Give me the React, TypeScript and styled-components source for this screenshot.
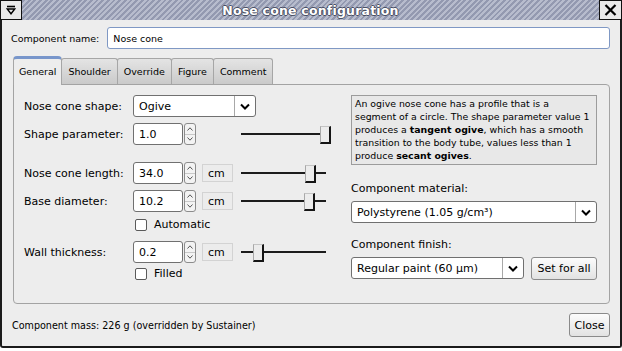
import React from 'react';
import styled, { createGlobalStyle } from 'styled-components';

const GlobalStyle = createGlobalStyle`
  html, body {
    margin: 0;
    padding: 0;
    background: #ffffff;
  }
  body {
    font-family: 'DejaVu Sans', 'Liberation Sans', sans-serif;
    font-size: 11px;
    color: #000;
  }
  * {
    box-sizing: border-box;
  }
`;

const Window = styled.div`
  width: 622px;
  height: 348px;
  display: flex;
  flex-direction: column;
`;

const TitleBar = styled.div`
  height: 20px;
  display: flex;
  background: repeating-linear-gradient(135deg, #9399b0 0 2px, #b7bccd 2px 4px);
`;

const TitleButton = styled.div<{ $w: number }>`
  width: ${({ $w }) => $w}px;
  height: 20px;
  background: #e9e9e9;
  border: 1px solid #111;
  display: flex;
  align-items: center;
  justify-content: center;
`;

const TitleText = styled.div`
  flex: 1;
  display: flex;
  align-items: center;
  justify-content: center;
  color: #ffffff;
  font-weight: bold;
  font-size: 12.5px;
  letter-spacing: 0.2px;
  text-shadow: 1px 0 0 #4a4f63, -1px 0 0 #4a4f63, 0 1px 0 #4a4f63, 0 -1px 0 #4a4f63;
`;

const Body = styled.div`
  flex: 1;
  display: flex;
  flex-direction: column;
  background: #ededed;
  border: 2px solid #1b1b1b;
  border-top: none;
  border-radius: 0 0 3px 3px;
  padding: 7px 10px 0 9px;
`;

const NameRow = styled.div`
  display: flex;
  align-items: center;
  height: 22px;
`;

const NameLabel = styled.span`
  margin-right: 8px;
  font-size: 9.5px;
  white-space: nowrap;
`;

const NameInput = styled.input`
  flex: 1;
  height: 22px;
  border: 1px solid #7f98c4;
  border-radius: 3px;
  background: #ffffff;
  padding: 0 5px;
  font-family: inherit;
  font-size: 9.5px;
  color: #000;
  outline: none;
`;

const TabStrip = styled.div`
  display: flex;
  align-items: flex-end;
  height: 28px;
  margin: 7px 0 0 2px;
  position: relative;
  z-index: 1;
`;

const Tab = styled.div<{ $active?: boolean }>`
  display: flex;
  align-items: center;
  padding: 0 6px;
  font-size: 9.5px;
  white-space: nowrap;
  border: 1px solid #a6a6a6;
  border-bottom: none;
  ${({ $active }) =>
    $active
      ? `
    height: 29px;
    margin-bottom: -1px;
    padding: 0 5px 2px 5px;
    background: #ededed;
    border-top: 3px solid #7896cb;
    border-radius: 4px 4px 0 0;
  `
      : `
    height: 26px;
    margin-left: -1px;
    background: linear-gradient(#e4e4e4, #cacaca);
    border-radius: 3px 3px 0 0;
  `}
`;

const Panel = styled.div`
  height: 220px;
  margin-left: 2px;
  border: 1px solid #a3a3a3;
  border-radius: 0 4px 4px 4px;
  padding: 10px 11px 0 10px;
  display: flex;
  gap: 20px;
`;

const LeftColumn = styled.div`
  width: 307px;
  display: flex;
  flex-direction: column;
`;

const RightColumn = styled.div`
  width: 246px;
  display: flex;
  flex-direction: column;
`;

const FormRow = styled.div<{ $mt?: number }>`
  display: flex;
  align-items: center;
  height: 22px;
  margin-top: ${({ $mt }) => $mt ?? 0}px;
`;

const RowLabel = styled.span`
  width: 109px;
  white-space: nowrap;
`;

const SelectBox = styled.div<{ $w: number }>`
  width: ${({ $w }) => $w}px;
  height: 22px;
  display: flex;
  background: #ffffff;
  border: 1px solid #707070;
  border-radius: 3px;
`;

const SelectText = styled.div`
  flex: 1;
  display: flex;
  align-items: center;
  padding-left: 5px;
  white-space: nowrap;
`;

const SelectArrow = styled.div`
  width: 21px;
  display: flex;
  align-items: center;
  justify-content: center;
  border-left: 1px solid #a8a8a8;
`;

const Spinner = styled.div`
  display: flex;
  height: 22px;
`;

const SpinText = styled.div`
  width: 50px;
  display: flex;
  align-items: center;
  padding-left: 5px;
  background: #ffffff;
  border: 1px solid #707070;
  border-radius: 3px;
`;

const SpinArrows = styled.div`
  width: 12px;
  margin-left: 1px;
  display: flex;
  flex-direction: column;
  background: #f3f3f3;
  border: 1px solid #8c8c8c;
  border-radius: 3px;
`;

const SpinHalf = styled.div<{ $bottom?: boolean }>`
  flex: 1;
  display: flex;
  align-items: center;
  justify-content: center;
  ${({ $bottom }) => ($bottom ? 'border-top: 1px solid #c8c8c8;' : '')}
`;

const UnitBox = styled.div`
  width: 31px;
  height: 18px;
  margin-left: 6px;
  display: flex;
  align-items: center;
  padding-left: 5px;
  background: #ececec;
  border: 1px solid #d3d3d3;
`;

const Slider = styled.div`
  position: relative;
  width: 90px;
  height: 22px;
  margin-left: auto;
`;

const Track = styled.div<{ $w: number }>`
  width: ${({ $w }) => $w}px;
  height: 2px;
  margin-top: 10px;
  background: #1c1c1c;
`;

const Thumb = styled.div<{ $pos: number }>`
  position: absolute;
  left: ${({ $pos }) => $pos}px;
  top: 3px;
  width: 11px;
  height: 18px;
  background: #ececec;
  border-left: 1px solid #a8a8a8;
  border-top: 1px solid #c4c4c4;
  border-right: 2px solid #151515;
  border-bottom: 2px solid #151515;
`;

const CheckRow = styled.div<{ $mt: number }>`
  display: flex;
  align-items: center;
  height: 13px;
  margin: ${({ $mt }) => $mt}px 0 0 111px;
`;

const CheckBox = styled.div`
  width: 12px;
  height: 12px;
  background: #ffffff;
  border: 1px solid #5a5a5a;
  border-radius: 2px;
  margin-right: 7px;
`;

const Description = styled.div`
  border: 1px solid #9c9c9c;
  background: #e8e8e8;
  padding: 1px 3px 2px 3px;
  font-size: 9.4px;
  line-height: 13px;
  white-space: nowrap;
`;

const FieldLabel = styled.div<{ $mt: number }>`
  margin-top: ${({ $mt }) => $mt}px;
  height: 14px;
  line-height: 14px;
`;

const SelectSlot = styled.div`
  margin-top: 5px;
`;

const FinishRow = styled.div`
  display: flex;
  align-items: flex-start;
  margin-top: 5px;
  gap: 7px;
`;

const Button = styled.button<{ $w: number; $h: number }>`
  width: ${({ $w }) => $w}px;
  height: ${({ $h }) => $h}px;
  padding: 0;
  font: inherit;
  color: #000;
  background: linear-gradient(#fcfcfc, #e2e2e2);
  border: 1px solid #8a8a8a;
  border-radius: 3px;
`;

const Footer = styled.div`
  display: flex;
  align-items: center;
  justify-content: space-between;
  height: 24px;
  margin: 9px 0 0 1px;
`;

const MassText = styled.span`
  font-size: 9.6px;
`;

const Chevron = () => (
  <svg width="10" height="7" viewBox="0 0 10 7">
    <polyline points="1,1.5 5,5.5 9,1.5" fill="none" stroke="#000" strokeWidth="2" />
  </svg>
);

const SmallArrow = ({ up }: { up?: boolean }) => (
  <svg width="6" height="4" viewBox="0 0 6 4">
    <polyline
      points={up ? '0.5,3.5 3,0.8 5.5,3.5' : '0.5,0.5 3,3.2 5.5,0.5'}
      fill="none"
      stroke="#555"
      strokeWidth="1"
    />
  </svg>
);

function Select({ w, value }: { w: number; value: string }) {
  return (
    <SelectBox $w={w}>
      <SelectText>{value}</SelectText>
      <SelectArrow>
        <Chevron />
      </SelectArrow>
    </SelectBox>
  );
}

function Spin({ value }: { value: string }) {
  return (
    <Spinner>
      <SpinText>{value}</SpinText>
      <SpinArrows>
        <SpinHalf>
          <SmallArrow up />
        </SpinHalf>
        <SpinHalf $bottom>
          <SmallArrow />
        </SpinHalf>
      </SpinArrows>
    </Spinner>
  );
}

function Range({ pos, track = 85 }: { pos: number; track?: number }) {
  return (
    <Slider>
      <Track $w={track} />
      <Thumb $pos={pos} />
    </Slider>
  );
}

const tabs = ['General', 'Shoulder', 'Override', 'Figure', 'Comment'];

export default function App() {
  return (
    <>
      <GlobalStyle />
      <Window>
        <TitleBar>
          <TitleButton $w={22}>
            <svg width="10" height="10" viewBox="0 0 10 10">
              <line x1="1" y1="1.5" x2="9" y2="1.5" stroke="#000" strokeWidth="1.6" />
              <polygon points="1.2,4 8.8,4 5,8.8" fill="none" stroke="#000" strokeWidth="1.4" />
            </svg>
          </TitleButton>
          <TitleText>Nose cone configuration</TitleText>
          <TitleButton $w={23}>
            <svg width="13" height="12" viewBox="0 0 13 12">
              <path d="M1.5 1 L11.5 11 M11.5 1 L1.5 11" stroke="#000" strokeWidth="2.2" />
            </svg>
          </TitleButton>
        </TitleBar>
        <Body>
          <NameRow>
            <NameLabel>Component name:</NameLabel>
            <NameInput readOnly value="Nose cone" />
          </NameRow>
          <TabStrip>
            {tabs.map((t, i) => (
              <Tab key={t} $active={i === 0}>
                {t}
              </Tab>
            ))}
          </TabStrip>
          <Panel>
            <LeftColumn>
              <FormRow>
                <RowLabel>Nose cone shape:</RowLabel>
                <Select w={123} value="Ogive" />
              </FormRow>
              <FormRow $mt={6}>
                <RowLabel>Shape parameter:</RowLabel>
                <Spin value="1.0" />
                <Range pos={79} track={79} />
              </FormRow>
              <FormRow $mt={17}>
                <RowLabel>Nose cone length:</RowLabel>
                <Spin value="34.0" />
                <UnitBox>cm</UnitBox>
                <Range pos={64} />
              </FormRow>
              <FormRow $mt={6}>
                <RowLabel>Base diameter:</RowLabel>
                <Spin value="10.2" />
                <UnitBox>cm</UnitBox>
                <Range pos={63} />
              </FormRow>
              <CheckRow $mt={6}>
                <CheckBox />
                Automatic
              </CheckRow>
              <FormRow $mt={10}>
                <RowLabel>Wall thickness:</RowLabel>
                <Spin value="0.2" />
                <UnitBox>cm</UnitBox>
                <Range pos={12} />
              </FormRow>
              <CheckRow $mt={4}>
                <CheckBox />
                Filled
              </CheckRow>
            </LeftColumn>
            <RightColumn>
              <Description>
                <div>An ogive nose cone has a profile that is a</div>
                <div>segment of a circle. The shape parameter value 1</div>
                <div>
                  produces a <b>tangent ogive</b>, which has a smooth
                </div>
                <div>transition to the body tube, values less than 1</div>
                <div>
                  produce <b>secant ogives</b>.
                </div>
              </Description>
              <FieldLabel $mt={17}>Component material:</FieldLabel>
              <SelectSlot>
                <Select w={246} value="Polystyrene (1.05 g/cm³)" />
              </SelectSlot>
              <FieldLabel $mt={15}>Component finish:</FieldLabel>
              <FinishRow>
                <Select w={173} value="Regular paint (60 µm)" />
                <Button $w={66} $h={23}>
                  Set for all
                </Button>
              </FinishRow>
            </RightColumn>
          </Panel>
          <Footer>
            <MassText>Component mass: 226 g (overridden by Sustainer)</MassText>
            <Button $w={41} $h={24}>
              Close
            </Button>
          </Footer>
        </Body>
      </Window>
    </>
  );
}
